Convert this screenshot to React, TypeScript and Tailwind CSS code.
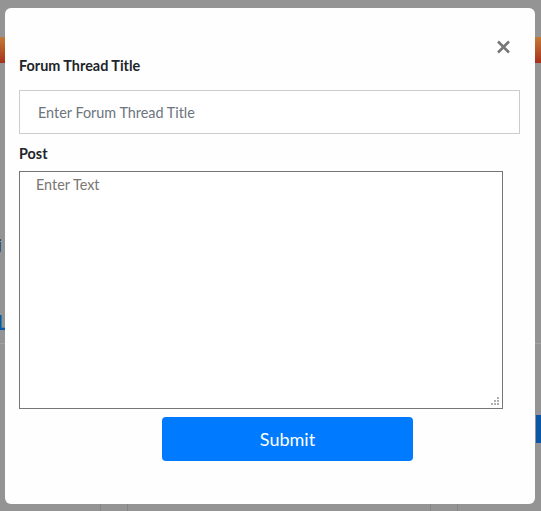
import React from "react";

export default function App() {
  return (
    <div
      className="relative w-[541px] h-[511px] overflow-hidden bg-[#949494] flex flex-col"
      style={{ fontFamily: "Lato, 'Open Sans', sans-serif" }}
    >
      {/* dimmed page behind the modal */}
      <div className="h-[37px] shrink-0" />
      <div className="h-[26px] shrink-0 bg-gradient-to-b from-[#c27a36] to-[#a82e1c]" />
      <div className="h-[173px] shrink-0" />
      <div className="h-[16px] shrink-0 text-[15px] leading-[16px] text-[#17243a] -ml-[2px]">j</div>
      <div className="h-[61px] shrink-0" />
      <div className="h-[18px] shrink-0 text-[20px] leading-[18px] font-bold text-[#0b57a8] -ml-[3px]">L</div>
      <div className="h-[12px] shrink-0" />
      <div className="h-px shrink-0 bg-[#a3a3a3]" />
      <div className="h-[71px] shrink-0" />
      <div className="h-[28px] shrink-0 flex justify-end">
        <div className="w-[5px] h-full bg-[#0c56a6]" />
      </div>
      <div className="h-[59px] shrink-0" />
      <div className="flex-1 flex">
        <div className="w-[100px]" />
        <div className="w-[28px] border-l border-r border-[#858585]" />
        <div className="w-[302px]" />
        <div className="w-[28px] border-l border-r border-[#858585]" />
      </div>

      {/* modal */}
      <div className="absolute left-[5px] top-[8px] w-[530px] h-[496px] bg-[#fefefe] rounded-[6px] pl-[14px] pr-[15px]">
        <div className="h-[48px] flex justify-end pr-[9px]">
          <svg width="15" height="14" viewBox="0 0 15 14" className="mt-[32px]">
            <path d="M2 1.5 L13 12.5 M13 1.5 L2 12.5" stroke="#777" strokeWidth="2.6" strokeLinecap="butt" />
          </svg>
        </div>
        <div className="text-[14.4px] leading-[20px] font-bold text-[#212529]">Forum Thread Title</div>
        <input
          className="mt-[14px] block w-[501px] h-[44px] border border-[#cccccc] bg-white px-[18px] text-[14.4px] text-[#495057] placeholder:text-[#6c757d] outline-none"
          placeholder="Enter Forum Thread Title"
        />
        <div className="mt-[10px] text-[14.4px] leading-[20px] font-bold text-[#212529]">Post</div>
        <div className="relative mt-[7px] w-[484px] h-[238px]">
          <textarea
            className="block w-full h-full resize-none border border-[#767676] bg-white pl-[16px] pt-[4px] text-[14.4px] leading-[17px] text-[#495057] placeholder:text-[#7a7672] outline-none"
            placeholder="Enter Text"
          />
          <svg width="9" height="9" viewBox="0 0 9 9" className="absolute right-[3px] bottom-[3px] pointer-events-none">
            <rect x="6" y="0" width="2" height="2" fill="#b0b0b0" />
            <rect x="3" y="3" width="2" height="2" fill="#b0b0b0" />
            <rect x="6" y="3" width="2" height="2" fill="#b0b0b0" />
            <rect x="0" y="6" width="2" height="2" fill="#b0b0b0" />
            <rect x="3" y="6" width="2" height="2" fill="#b0b0b0" />
            <rect x="6" y="6" width="2" height="2" fill="#b0b0b0" />
          </svg>
        </div>
        <button className="mt-[8px] ml-[143px] block w-[251px] h-[44px] rounded-[4px] bg-[#007bff] text-white text-[18px] leading-[22px]">
          Submit
        </button>
      </div>
    </div>
  );
}
